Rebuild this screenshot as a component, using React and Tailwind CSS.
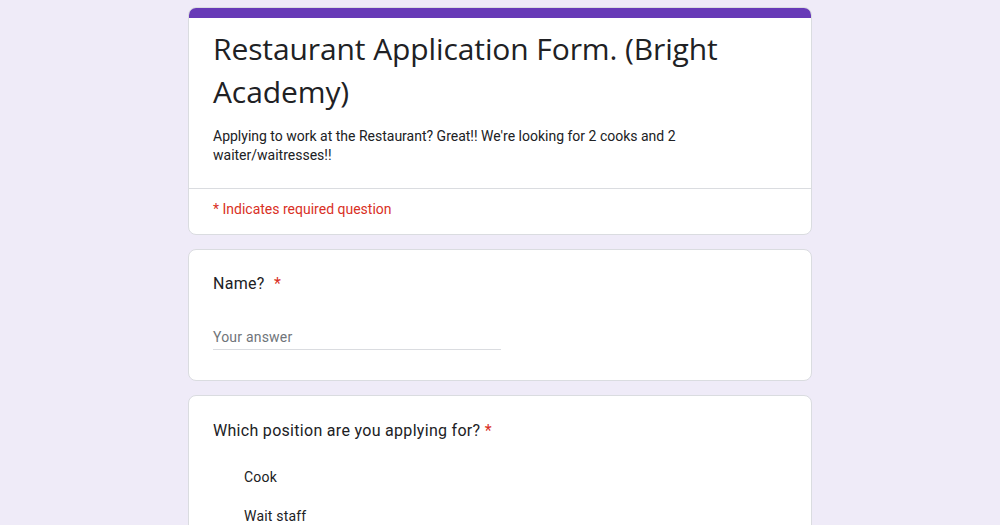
export default function App() {
  return (
    <div className="min-h-[525px] w-full bg-[#efebf8] font-['Roboto',sans-serif] text-[#202124]">
      <div className="mx-auto flex w-[624px] flex-col gap-[14px] pt-[7px] pb-6">
        <div className="overflow-hidden rounded-lg border border-[#dadce0] bg-white">
          <div className="h-[10px] bg-[#673ab7]" />
          <div className="px-6 pt-[9px] pb-[23px]">
            <h1 className="font-['Open_Sans',sans-serif] text-[30px] leading-[43px] tracking-[-0.1px] text-[#202124]">
              Restaurant Application Form. (Bright Academy)
            </h1>
            <p className="mt-[14px] w-[480px] text-[14px] leading-[19px]">
              Applying to work at the Restaurant? Great!! We're looking for 2 cooks and 2 waiter/waitresses!!
            </p>
          </div>
          <div className="border-t border-[#dadce0] px-6 pt-[10px] pb-[15px] text-[14px] leading-[20px] text-[#d93025]">
            * Indicates required question
          </div>
        </div>

        <div className="rounded-lg border border-[#dadce0] bg-white px-6 pt-[22px] pb-[30px]">
          <div className="text-[16px] leading-[24px] tracking-[0.3px]">
            Name? <span className="ml-[5px] text-[#d93025]">*</span>
          </div>
          <div className="mt-[31px] w-[288px] border-b border-[#dadce0] pb-[2px] text-[14px] leading-[20px] tracking-[0.2px] text-[#70757a]">
            Your answer
          </div>
        </div>

        <div className="rounded-lg border border-[#dadce0] bg-white px-6 pt-[23px] pb-8">
          <div className="text-[16px] leading-[24px] tracking-[0.3px]">
            Which position are you applying for? <span className="text-[#d93025]">*</span>
          </div>
          <div className="mt-[24px] flex flex-col gap-[19px] pl-[31px] text-[14px] leading-[20px] tracking-[0.2px]">
            <div>Cook</div>
            <div>Wait staff</div>
          </div>
        </div>
      </div>
    </div>
  );
}
